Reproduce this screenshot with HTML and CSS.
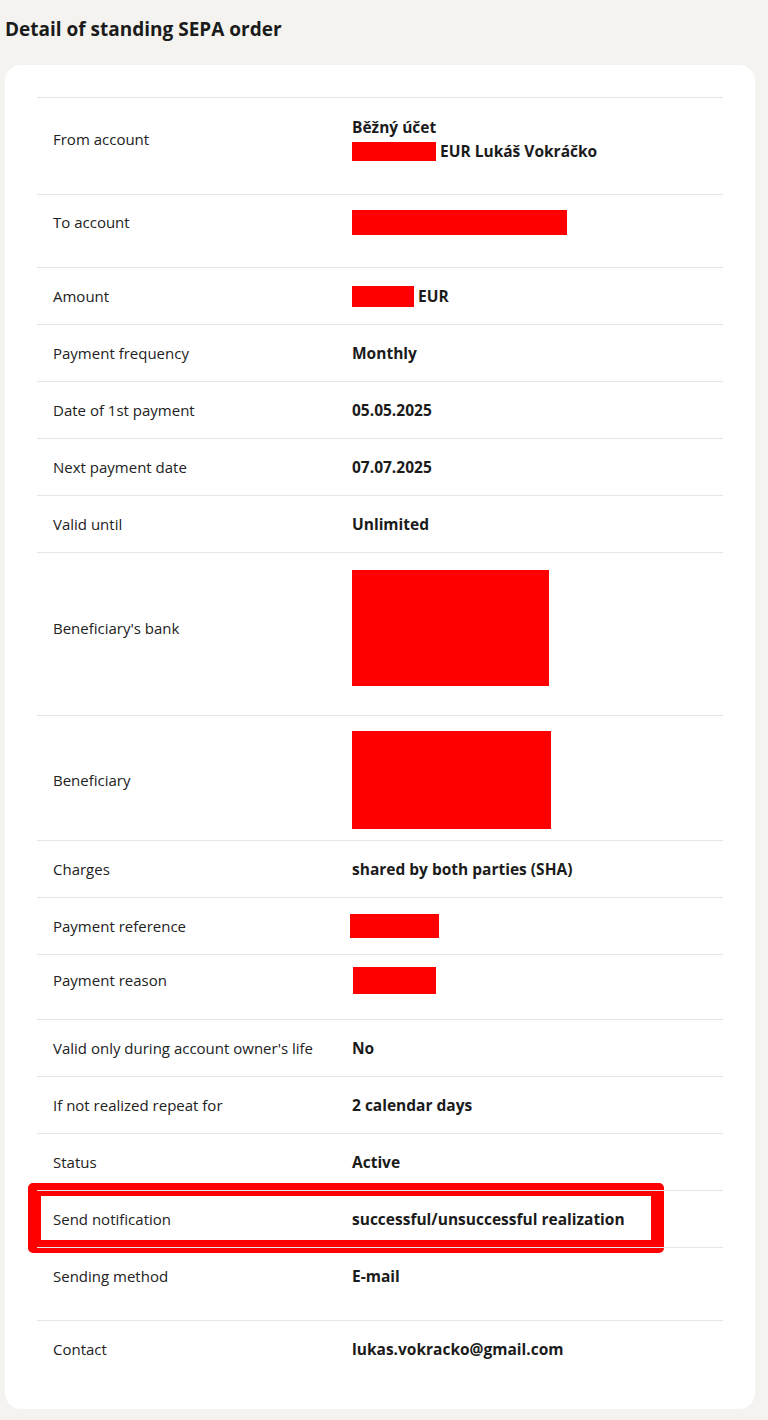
FILE: index.html
```html
<!DOCTYPE html>
<html lang="en">
<head>
<meta charset="utf-8">
<title>Detail of standing SEPA order</title>
<link rel="stylesheet" href="styles.css">
</head>
<body>
<div class="page">
  <h1 class="title">Detail of standing SEPA order</h1>
  <div class="card">
    <div class="row row-from">
      <div class="label">From account</div>
      <div class="value value-lines">
        <div>Běžný účet</div>
        <div><span class="redact r-from"></span> EUR Lukáš Vokráčko</div>
      </div>
    </div>
    <div class="row row-to">
      <div class="label">To account</div>
      <div class="value"><span class="redact r-to"></span></div>
    </div>
    <div class="row">
      <div class="label">Amount</div>
      <div class="value"><span class="redact r-amount"></span> EUR</div>
    </div>
    <div class="row">
      <div class="label">Payment frequency</div>
      <div class="value">Monthly</div>
    </div>
    <div class="row">
      <div class="label">Date of 1st payment</div>
      <div class="value">05.05.2025</div>
    </div>
    <div class="row">
      <div class="label">Next payment date</div>
      <div class="value">07.07.2025</div>
    </div>
    <div class="row">
      <div class="label">Valid until</div>
      <div class="value">Unlimited</div>
    </div>
    <div class="row row-bank">
      <div class="label">Beneficiary's bank</div>
      <div class="value"><span class="redact r-bank"></span></div>
    </div>
    <div class="row row-benef">
      <div class="label">Beneficiary</div>
      <div class="value"><span class="redact r-benef"></span></div>
    </div>
    <div class="row">
      <div class="label">Charges</div>
      <div class="value">shared by both parties (SHA)</div>
    </div>
    <div class="row row-ref">
      <div class="label">Payment reference</div>
      <div class="value"><span class="redact r-ref"></span></div>
    </div>
    <div class="row row-reason">
      <div class="label">Payment reason</div>
      <div class="value"><span class="redact r-reason"></span></div>
    </div>
    <div class="row">
      <div class="label">Valid only during account owner's life</div>
      <div class="value">No</div>
    </div>
    <div class="row">
      <div class="label">If not realized repeat for</div>
      <div class="value">2 calendar days</div>
    </div>
    <div class="row">
      <div class="label">Status</div>
      <div class="value">Active</div>
    </div>
    <div class="row">
      <div class="highlight"></div>
      <div class="label">Send notification</div>
      <div class="value">successful/unsuccessful realization</div>
    </div>
    <div class="row row-method">
      <div class="label">Sending method</div>
      <div class="value">E-mail</div>
    </div>
    <div class="row">
      <div class="label">Contact</div>
      <div class="value">lukas.vokracko@gmail.com</div>
    </div>
  </div>
</div>
</body>
</html>
```

FILE: styles.css
```css
html, body {
  margin: 0;
  padding: 0;
  background: #f4f3ef;
}

body {
  font-family: "Open Sans", "Noto Sans", "Liberation Sans", sans-serif;
  color: #1b1b1b;
}

.page {
  padding: 0 0 11px 5px;
}

.title {
  margin: 0;
  padding-top: 18px;
  font-size: 19px;
  line-height: 22px;
  font-weight: 700;
  color: #1b1b1b;
}

.card {
  margin-top: 25px;
  width: 750px;
  box-sizing: border-box;
  background: #ffffff;
  border-radius: 16px;
  padding: 32px;
}

.row {
  position: relative;
  display: grid;
  grid-template-columns: 299px 1fr;
  align-items: center;
  padding: 19px 16px 17px 16px;
  font-size: 15px;
  line-height: 21px;
}

.row::before {
  content: "";
  position: absolute;
  left: 0;
  right: 0;
  top: 0;
  height: 1px;
  background: #e6e6e6;
  z-index: 2;
}

.label {
  font-weight: 400;
  color: #222222;
}

.value {
  font-weight: 700;
  font-size: 15.5px;
  color: #1b1b1b;
}

.value-lines {
  line-height: 24px;
}

.redact {
  display: inline-block;
  background: #ff0000;
  vertical-align: middle;
}

.r-from { width: 84px; height: 19px; margin-top: -3px; }
.r-to { width: 215px; height: 25px; display: block; }
.r-amount { width: 62px; height: 21px; margin-top: -3px; }
.r-bank { width: 197px; height: 116px; display: block; }
.r-benef { width: 199px; height: 98px; display: block; }
.r-ref { width: 89px; height: 24px; display: block; margin-left: -2px; }
.r-reason { width: 83px; height: 27px; display: block; margin-left: 1px; }

.row-from { padding-top: 18px; padding-bottom: 31px; }
.row-to { padding-top: 16px; padding-bottom: 32px; }
.row-bank { padding-top: 18px; padding-bottom: 29px; }
.row-benef { padding-top: 16px; padding-bottom: 11px; }
.row-ref { padding-top: 17px; padding-bottom: 16px; }
.row-reason { padding-top: 13px; padding-bottom: 25px; }
.row-method { padding-bottom: 33px; }

.highlight {
  position: absolute;
  left: -9px;
  top: -7px;
  width: 636px;
  height: 70px;
  box-sizing: border-box;
  border: 13px solid #ff0000;
  border-radius: 5px;
  z-index: 1;
  pointer-events: none;
}
```
